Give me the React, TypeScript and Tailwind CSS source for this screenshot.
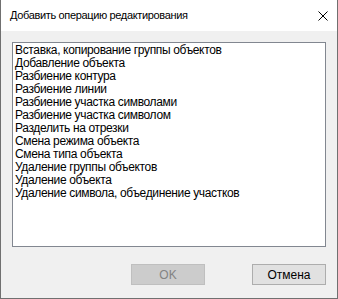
const items = [
  "Вставка, копирование группы объектов",
  "Добавление объекта",
  "Разбиение контура",
  "Разбиение линии",
  "Разбиение участка символами",
  "Разбиение участка символом",
  "Разделить на отрезки",
  "Смена режима объекта",
  "Смена типа объекта",
  "Удаление группы объектов",
  "Удаление объекта",
  "Удаление символа, объединение участков",
];

export default function App() {
  return (
    <div
      className="w-[338px] h-[299px] flex flex-col bg-[#f0f0f0] border-x border-b border-[#707070] text-[12px] text-black"
      style={{ fontFamily: '"Liberation Sans", Arial, sans-serif' }}
    >
      {/* title bar */}
      <div className="h-[31px] shrink-0 bg-white flex items-center justify-between pl-[9px] pr-[9px]">
        <span className="leading-none text-[11px] tracking-[-0.35px]">Добавить операцию редактирования</span>
        <svg width="10" height="10" viewBox="0 0 10 10" className="shrink-0">
          <path d="M0.5 0.5 L9.5 9.5 M9.5 0.5 L0.5 9.5" stroke="#000" strokeWidth="1" />
        </svg>
      </div>

      <div className="flex-1 flex flex-col px-[11px] pt-[11px] pb-[13px]">
        <div className="h-[205px] bg-white border border-[#828790] pl-[2px] pt-[1px] tracking-[-0.35px]">
          {items.map((t) => (
            <div key={t} className="h-[13px] leading-[13px] whitespace-nowrap">
              {t}
            </div>
          ))}
        </div>

        <div className="mt-auto flex justify-end gap-[47px]">
          <button className="w-[74px] h-[21px] bg-[#cccccc] border border-[#bfbfbf] text-[#838383] leading-none">
            OK
          </button>
          <button className="w-[74px] h-[21px] bg-[#e1e1e1] border border-[#adadad] leading-none">
            Отмена
          </button>
        </div>
      </div>
    </div>
  );
}
